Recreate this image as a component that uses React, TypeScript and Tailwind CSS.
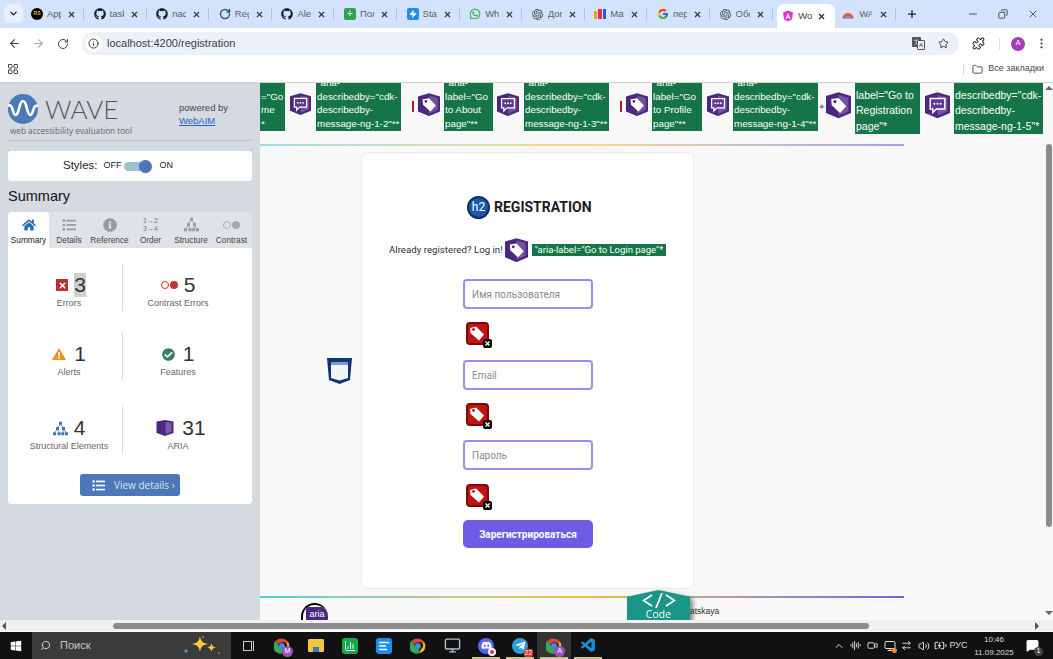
import React from 'react';
import {
  ArrowLeft, ArrowRight, RotateCw, Info, Star, Puzzle, MoreVertical, LayoutGrid, Folder, Minus, X, Plus,
  ChevronDown, ChevronUp, Search, Copy, Video, Monitor, ArrowRightLeft, Volume2, BatteryCharging, MessageSquare,
  AudioLines, BarChart3, AlignLeft, Zap,
} from 'lucide-react';
import { FaGithub, FaWhatsapp, FaHome, FaWindows, FaDiscord, FaTelegramPlane, FaInfoCircle, FaCheckCircle } from 'react-icons/fa';
import { FcGoogle } from 'react-icons/fc';
import { SiOpenai } from 'react-icons/si';
import { VscVscode } from 'react-icons/vsc';

const UI = "font-['Liberation_Sans',Arial,sans-serif]";

function ChromeDot({ size = 16, badge }: { size?: number; badge?: string }) {
  return (
    <span className="relative inline-flex">
      <svg width={size} height={size} viewBox="0 0 24 24">
        <path d="M12 1a11 11 0 0 1 9.5 5.5H12A5.5 5.5 0 0 0 7 9.7L3 3.8A11 11 0 0 1 12 1z" fill="#ea4335" />
        <path d="M21.5 6.5A11 11 0 0 1 13 23l4-7a5.5 5.5 0 0 0 0-9.5z" fill="#fbbc04" />
        <path d="M3 3.8l4.8 8.4a5.5 5.5 0 0 0 6.6 3.7L13 23A11 11 0 0 1 3 3.8z" fill="#34a853" />
        <circle cx="12" cy="12" r="4.4" fill="#4285f4" />
      </svg>
      {badge && (
        <span className="absolute -right-[3px] -bottom-[3px] flex h-[11px] w-[11px] items-center justify-center rounded-full bg-[#9b4fc0] text-[7px] text-white">
          {badge}
        </span>
      )}
    </span>
  );
}

const tabs: { title: string; icon: React.ReactNode }[] = [
  { title: 'App', icon: <span className="flex h-[12px] w-[12px] items-center justify-center rounded-full bg-black text-[5px] font-bold text-[#e0b030]">RS</span> },
  { title: 'task', icon: <FaGithub size={12} color="#1b1f24" /> },
  { title: 'nad', icon: <FaGithub size={12} color="#1b1f24" /> },
  { title: 'Reg', icon: <RotateCw size={12} color="#2b5c78" strokeWidth={3} /> },
  { title: 'Ale', icon: <FaGithub size={12} color="#1b1f24" /> },
  { title: 'Пол', icon: <span className="flex h-[12px] w-[12px] items-center justify-center rounded-[2px] bg-[#2fa14f] text-[10px] leading-none text-white">+</span> },
  { title: 'Stat', icon: <span className="flex h-[12px] w-[12px] items-center justify-center rounded-[2px] bg-[#1f8cf0]"><Zap size={8} color="#fff" fill="#fff" /></span> },
  { title: 'Wh', icon: <FaWhatsapp size={12} color="#25a83f" /> },
  { title: 'Дог', icon: <SiOpenai size={11} color="#3f3f3f" /> },
  { title: 'Mat', icon: <span className="flex h-[10px] w-[12px] items-end gap-px"><i className="h-[8px] w-[3px] bg-[#f0a020]" /><i className="h-[10px] w-[4px] bg-[#e03050]" /><i className="h-[10px] w-[3px] bg-[#2060d0]" /></span> },
  { title: 'пер', icon: <FcGoogle size={12} /> },
  { title: 'Обе', icon: <SiOpenai size={11} color="#3f3f3f" /> },
];

function TabStrip() {
  return (
    <div className="flex h-[28px] items-start bg-[#d3e3fd] text-[9.5px] text-[#5a5f66]">
      <div className="mt-[4px] ml-[4px] flex h-[19px] w-[19px] items-center justify-center rounded-[6px] bg-[#e9f0fd]">
        <ChevronDown size={11} color="#222" strokeWidth={3} />
      </div>
      <div className="ml-[2px] flex">
        {tabs.map((t, i) => (
          <div key={i} className="flex h-[28px] w-[62.6px] items-center pl-[6px]">
            <span className="flex w-[12px] justify-center">{t.icon}</span>
            <span className="ml-[4px] w-[14px] overflow-hidden whitespace-nowrap">{t.title}</span>
            <X size={9} color="#333" strokeWidth={3} className="ml-[6px]" />
            <span className="ml-[7px] h-[12px] w-px bg-[#a9c4ee]" />
          </div>
        ))}
      </div>
      <div className="mt-[4px] ml-[1px] flex h-[24px] w-[58px] items-center rounded-t-[7px] bg-white pl-[5px] text-[#444]">
        <svg width="12" height="12" viewBox="0 0 24 24">
          <path d="M12 1l10 4-2 14-8 4-8-4L2 5z" fill="#e535c9" />
          <path d="M12 6l5 12h-2.400l-1-2.600h-3.200l-1 2.600H7z" fill="#fff" />
        </svg>
        <span className="ml-[4px] w-[14px] overflow-hidden whitespace-nowrap">Wor</span>
        <X size={9} color="#222" strokeWidth={3} className="ml-[5px]" />
      </div>
      <div className="flex h-[28px] w-[63px] items-center pl-[7px]">
        <svg width="12" height="11" viewBox="0 0 24 20">
          <path d="M1 18a11 11 0 0 1 22 0h-6a5 5 0 0 0-10 0z" fill="#e8503a" />
          <path d="M7 18a5 5 0 0 1 10 0z" fill="#4a9bd8" />
        </svg>
        <span className="ml-[5px] w-[13px] overflow-hidden whitespace-nowrap">WA</span>
        <X size={9} color="#333" strokeWidth={3} className="ml-[7px]" />
        <span className="ml-[7px] h-[12px] w-px bg-[#a9c4ee]" />
      </div>
      <Plus size={12} color="#222" strokeWidth={2.5} className="mt-[8px] ml-[8px]" />
      <div className="ml-auto flex h-[28px] items-center gap-[19px] pr-[14px]">
        <Minus size={12} color="#555" />
        <Copy size={10} color="#333" className="-scale-x-100" />
        <X size={12} color="#555" />
      </div>
    </div>
  );
}

function TranslateIcon() {
  return (
    <span className="relative ml-auto block h-[13px] w-[13px]">
      <i className="absolute top-0 left-0 flex h-[10px] w-[9px] items-center justify-center rounded-[1px] bg-[#555] text-[6px] text-white not-italic">文</i>
      <i className="absolute right-0 bottom-0 flex h-[10px] w-[8px] items-center justify-center rounded-[1px] border border-[#555] bg-[#ebf0f9] text-[6px] text-[#333] not-italic">A</i>
    </span>
  );
}

function Toolbar() {
  return (
    <div className="flex h-[28px] items-center bg-white pt-[3px]">
      <ArrowLeft size={13} color="#444" className="ml-[8px]" />
      <ArrowRight size={13} color="#a8a8a8" className="ml-[11px]" />
      <RotateCw size={12} color="#444" className="ml-[12px]" />
      <div className="ml-[13px] flex h-[23px] w-[877px] items-center rounded-full bg-[#ebf0f9]">
        <span className="ml-[3px] flex h-[17px] w-[17px] items-center justify-center rounded-full bg-white">
          <Info size={11} color="#333" />
        </span>
        <span className="ml-[5px] text-[11px] text-[#3c4043]">localhost:4200/registration</span>
        <TranslateIcon />
        <Star size={11} color="#333" className="mr-[10px] ml-[13px]" />
      </div>
      <Puzzle size={13} color="#333" className="ml-[13px]" />
      <span className="ml-[14px] h-[12px] w-px bg-[#d5dfee]" />
      <span className="ml-[11px] flex h-[14px] w-[14px] items-center justify-center rounded-full bg-[#a33fb5] text-[7px] text-white">A</span>
      <MoreVertical size={13} color="#333" className="ml-[10px]" />
    </div>
  );
}

function Bookmarks() {
  return (
    <div className="flex h-[27px] items-center border-b border-[#d0d0d0] bg-white">
      <LayoutGrid size={12} color="#444" className="ml-[7px]" />
      <span className="ml-auto h-[11px] w-px bg-[#c9daf5]" />
      <Folder size={11} color="#444" className="ml-[8px]" />
      <span className="mr-[9px] ml-[5px] text-[9px] text-[#444]">Все закладки</span>
    </div>
  );
}

function Shield({ size = 22, kind, className = '' }: { size?: number; kind: 'tag' | 'chat'; className?: string }) {
  return (
    <svg width={size} height={size * 1.06} viewBox="0 0 24 25" className={`shrink-0 ${className}`}>
      <path d="M0 3.500L12 0l12 3.500V20l-12 5L0 20z" fill="#4b2780" />
      <path d="M12 2.500l9.500 2.700V18.400L12 22.500z" fill="#73529f" />
      {kind === 'tag' ? (
        <g>
          <path d="M5 6.500l7-1 7.500 8-6 6.500L5.500 12.500z" fill="#fff" />
          <circle cx="8.600" cy="9" r="1.500" fill="#4b2780" />
        </g>
      ) : (
        <g>
          <path d="M5 6h14v10h-8l-3.500 3.500V16H5z" fill="#5d3a92" stroke="#fff" strokeWidth="1.400" />
          <circle cx="9" cy="11" r="1" fill="#fff" />
          <circle cx="12" cy="11" r="1" fill="#fff" />
          <circle cx="15" cy="11" r="1" fill="#fff" />
        </g>
      )}
    </svg>
  );
}

function Green({ lines, className }: { lines: string[]; className: string }) {
  return (
    <div className={`flex shrink-0 flex-col justify-end overflow-hidden bg-[#167548] pl-px text-white ${className}`}>
      {lines.map((l, i) => (
        <span key={i} className="whitespace-nowrap">{l}</span>
      ))}
    </div>
  );
}

const RedMark = ({ className }: { className: string }) => <span className={`mt-[18px] h-[11px] w-[2px] shrink-0 bg-[#b02020] ${className}`} />;

function AnnotationStrip() {
  const small = 'h-[48px] text-[9.8px] leading-[13.8px]';
  const big = 'h-[51px] text-[10.5px] leading-[15.5px]';
  return (
    <div className="flex h-[61px] items-start overflow-hidden">
      <Green className={`w-[25px] ${small}`} lines={['="Go', 'me', '*']} />
      <Shield kind="chat" size={21} className="mt-[10px] ml-[5px]" />
      <Green className={`ml-[5px] w-[85px] ${small}`} lines={['"aria-', 'describedby="cdk-', 'describedby-', 'message-ng-1-2"**']} />
      <RedMark className="ml-[11px]" />
      <Shield kind="tag" size={22} className="mt-[10px] ml-[4px]" />
      <Green className={`ml-[4px] w-[49px] ${small}`} lines={['"aria-', 'label="Go', 'to About', 'page"**']} />
      <Shield kind="chat" size={22} className="mt-[10px] ml-[4px]" />
      <Green className={`ml-[5px] w-[85px] ${small}`} lines={['"aria-', 'describedby="cdk-', 'describedby-', 'message-ng-1-3"**']} />
      <RedMark className="ml-[11px]" />
      <Shield kind="tag" size={22} className="mt-[10px] ml-[4px]" />
      <Green className={`ml-[4px] w-[50px] ${small}`} lines={['"aria-', 'label="Go', 'to Profile', 'page"**']} />
      <Shield kind="chat" size={22} className="mt-[10px] ml-[5px]" />
      <Green className={`ml-[4px] w-[85px] ${small}`} lines={['"aria-', 'describedby="cdk-', 'describedby-', 'message-ng-1-4"**']} />
      <span className="mt-[20px] w-[8px] shrink-0 text-[9px] leading-none text-[#7b6ff0]">✦</span>
      <Shield kind="tag" size={25} className="mt-[9px]" />
      <Green className={`ml-[4px] w-[65px] ${big}`} lines={['"aria-', 'label="Go to', 'Registration', 'page"*']} />
      <Shield kind="chat" size={25} className="mt-[9px] ml-[5px]" />
      <Green className={`ml-[4px] w-[89px] ${big}`} lines={['"aria-', 'describedby="cdk-', 'describedby-', 'message-ng-1-5"*']} />
    </div>
  );
}

function MissingLabel() {
  return (
    <div className="relative ml-[104px] h-[24px] w-[24px]">
      <svg width="23" height="23" viewBox="0 0 23 23">
        <rect x="1" y="1" width="21" height="21" rx="3" fill="#c01515" stroke="#7d0808" strokeWidth="2" />
        <path d="M4 6l6-1.500 8 8-5 6-8.500-7.500z" fill="#fff" />
        <circle cx="7.500" cy="7.500" r="1.400" fill="#c01515" />
      </svg>
      <span className="absolute right-[-2px] bottom-[-2px] flex h-[9px] w-[9px] items-center justify-center rounded-[2px] bg-black">
        <X size={7} color="#fff" strokeWidth={4} />
      </span>
    </div>
  );
}

function Field({ placeholder }: { placeholder: string }) {
  return (
    <input
      placeholder={placeholder}
      className="ml-[101px] block h-[30px] w-[130px] rounded-[4px] border-2 border-[#9a8cf2] bg-white px-[7px] text-[10px] outline-none placeholder:text-[#8b8b8b]"
    />
  );
}

function RegistrationCard() {
  return (
    <div className="mt-[6px] ml-[101px] h-[437px] w-[333px] rounded-[7px] border border-[#ececec] bg-white font-['Roboto',sans-serif]">
      <div className="mt-[42px] flex h-[24px] items-center pl-[105px]">
        <span className="flex h-[23px] w-[23px] items-center justify-center rounded-full border-2 border-[#0e2f66] bg-[#1c58a8] text-[12px] text-white">h2</span>
        <h2 className="ml-[4px] text-[14px] font-bold text-[#1b1b1b]">REGISTRATION</h2>
      </div>
      <div className="mt-[19px] flex h-[24px] items-center pl-[27px]">
        <span className="w-[113px] whitespace-nowrap text-[9.7px] text-[#333]">Already registered? Log in!</span>
        <Shield kind="tag" size={23} className="ml-[3px]" />
        <span className="ml-[4px] h-[12px] w-[134px] overflow-hidden bg-[#167548] text-center text-[9.5px] leading-[12px] whitespace-nowrap text-white">"aria-label="Go to Login page"*</span>
      </div>
      <div className="mt-[17px]"><Field placeholder="Имя пользователя" /></div>
      <div className="mt-[13px]"><MissingLabel /></div>
      <div className="mt-[14px]"><Field placeholder="Email" /></div>
      <div className="mt-[13px]"><MissingLabel /></div>
      <div className="mt-[13px]"><Field placeholder="Пароль" /></div>
      <div className="mt-[14px]"><MissingLabel /></div>
      <button className="mt-[12px] ml-[101px] h-[28px] w-[130px] rounded-[5px] bg-[#6e5ce6] text-[10px] font-bold text-white">Зарегистрироваться</button>
    </div>
  );
}

function TreeIcon({ color, size = 15 }: { color: string; size?: number }) {
  return (
    <svg width={size} height={size} viewBox="0 0 20 20" fill={color}>
      <rect x="8" y="1" width="4" height="4" />
      <rect x="4" y="8" width="4" height="4" />
      <rect x="12" y="8" width="4" height="4" />
      <rect x="0" y="15" width="4" height="4" />
      <rect x="6" y="15" width="4" height="4" />
      <rect x="11" y="15" width="4" height="4" />
      <rect x="16" y="15" width="4" height="4" />
      <path d="M10 5L6 8M10 5l4 3M6 12L2 15M6 12l2 3M14 12l-1 3M14 12l4 3" stroke={color} fill="none" />
    </svg>
  );
}

function ListIcon({ color, size = 14 }: { color: string; size?: number }) {
  return (
    <svg width={size} height={size} viewBox="0 0 16 16" fill={color}>
      <circle cx="2" cy="3" r="1.500" /><rect x="5" y="2" width="11" height="2" />
      <circle cx="2" cy="8" r="1.500" /><rect x="5" y="7" width="11" height="2" />
      <circle cx="2" cy="13" r="1.500" /><rect x="5" y="12" width="11" height="2" />
    </svg>
  );
}

const waveTabs: { label: string; w: string; icon: React.ReactNode }[] = [
  { label: 'Summary', w: 'w-[41px]', icon: <FaHome size={14} color="#2f6db0" /> },
  { label: 'Details', w: 'w-[40px]', icon: <ListIcon color="#9a9a9a" /> },
  { label: 'Reference', w: 'w-[41px]', icon: <FaInfoCircle size={14} color="#9a9a9a" /> },
  { label: 'Order', w: 'w-[41px]', icon: <span className="text-[7px] leading-[8px] text-[#777]">1→2<br />3→4</span> },
  { label: 'Structure', w: 'w-[40px]', icon: <TreeIcon color="#9a9a9a" /> },
  { label: 'Contrast', w: 'w-[41px]', icon: <span className="flex items-center gap-px"><i className="h-[8px] w-[8px] rounded-full border border-[#aaa]" /><i className="h-[8px] w-[8px] rounded-full bg-[#aaa]" /></span> },
];

function Stat({ icon, value, label, highlight, gap = 'gap-[6px]', shift = '' }: { icon: React.ReactNode; value: string; label: string; highlight?: boolean; gap?: string; shift?: string }) {
  return (
    <div className="flex h-[48px] flex-col items-center justify-start pt-[10px]">
      <div className={`flex h-[24px] items-center ${gap} ${shift}`}>
        {icon}
        <span className={`text-[21px] leading-[24px] text-[#333] ${highlight ? 'bg-[#cfcfcf]' : ''}`}>{value}</span>
      </div>
      <span className="text-[9px] leading-[12px] whitespace-nowrap text-[#666]">{label}</span>
    </div>
  );
}

function StatRow({ left, right, className }: { left: React.ReactNode; right: React.ReactNode; className: string }) {
  return (
    <div className={`grid grid-cols-[107px_110px] ${className}`}>
      <div className="border-r border-[#dddddd]">{left}</div>
      <div>{right}</div>
    </div>
  );
}

function Sidebar() {
  return (
    <div className={`w-[260px] shrink-0 bg-[#d5d9e0] pt-[11px] ${UI}`}>
      <div className="ml-[8px] w-[243px] border-b border-[#b9bdc2] pb-[2px]">
        <div className="flex h-[31px]">
          <svg width="30" height="30" viewBox="0 0 30 30" className="shrink-0">
            <circle cx="15" cy="15" r="15" fill="#4a7ab8" />
            <path d="M0 12c3-2 4 1 5 5s3 6 5 1 2-11 5-11 3 6 5 11 4 3 5-1 2-6 5-5" fill="none" stroke="#fff" strokeWidth="2.600" />
          </svg>
          <span className="ml-[7px] w-[72px] font-['Lato',sans-serif] text-[26px] leading-[31px] font-light text-[#555]">WAVE</span>
          <div className="ml-[62px] pt-[7px] text-[9.5px] leading-[13px] text-[#444]">
            powered by<br />
            <a className="text-[#1a63c9] underline">WebAIM</a>
          </div>
        </div>
        <div className="-mt-[1px] pl-[2px] font-['Open_Sans',sans-serif] text-[8.2px] leading-[14px] text-[#666]">web accessibility evaluation tool</div>
      </div>
      <div className="mt-[10px] ml-[8px] flex h-[30px] w-[244px] items-center rounded-[3px] bg-white pl-[55px] text-[#222]">
        <span className="text-[11.5px]">Styles:</span>
        <span className="ml-[6px] text-[9px]">OFF</span>
        <span className="relative ml-[2px] h-[9px] w-[25px] rounded-full bg-[#a1c0cc]">
          <span className="absolute top-[-2px] right-[-3px] h-[13px] w-[13px] rounded-full bg-[#4a76b8] shadow" />
        </span>
        <span className="ml-[11px] text-[9px]">ON</span>
      </div>
      <div className="mt-[7px] ml-[8px] text-[14.5px] leading-[17px] text-[#111]">Summary</div>
      <div className="mt-[7px] ml-[8px] w-[244px]">
        <div className="flex h-[36px] rounded-t-[4px] bg-[#dfe2e7]">
          {waveTabs.map((t, i) => (
            <div key={t.label} className={`flex ${t.w} flex-col items-center justify-end pb-[3px] ${i === 0 ? 'rounded-t-[4px] bg-white text-[#222]' : 'text-[#444]'}`}>
              <span className="flex h-[17px] items-center">{t.icon}</span>
              <span className="mt-[2px] text-[8.3px] leading-[10px] whitespace-nowrap">{t.label}</span>
            </div>
          ))}
        </div>
        <div className="h-[256px] rounded-b-[4px] bg-white pt-[15px] pl-[8px]">
          <StatRow
            className=""
            left={<Stat highlight value="3" label="Errors" shift="pl-[4px]" icon={<span className="flex h-[12px] w-[12px] items-center justify-center bg-[#b8322f]"><X size={9} color="#fff" strokeWidth={4} /></span>} />}
            right={<Stat value="5" label="Contrast Errors" icon={<span className="flex items-center gap-px"><i className="h-[8px] w-[8px] rounded-full border border-[#c0392b]" /><i className="h-[8px] w-[8px] rounded-full bg-[#c0392b]" /></span>} />}
          />
          <StatRow
            className="mt-[21px]"
            left={<Stat value="1" label="Alerts" gap="gap-[8px]" icon={<svg width="14" height="12" viewBox="0 0 14 12"><path d="M7 0l7 12H0z" fill="#e8921a" /><rect x="6.200" y="4" width="1.600" height="4.500" fill="#fff" /><rect x="6.200" y="9.300" width="1.600" height="1.600" fill="#fff" /></svg>} />}
            right={<Stat value="1" label="Features" gap="gap-[8px]" icon={<FaCheckCircle size={13} color="#3a7f63" />} />}
          />
          <StatRow
            className="mt-[26px]"
            left={<Stat value="4" label="Structural Elements" icon={<TreeIcon color="#3f73bf" />} />}
            right={<Stat value="31" label="ARIA" gap="gap-[8px]" shift="pl-[6px]" icon={<svg width="18" height="16" viewBox="0 0 17 16"><path d="M0 1.500L8.500 0 17 1.500V13l-8.500 3L0 13z" fill="#4b2780" /><path d="M9 2l6 .5v9.500l-6 2z" fill="#7a5aa8" /></svg>} />}
          />
          <div className="mt-[20px] ml-[64px] flex h-[22px] w-[100px] items-center rounded-[3px] bg-[#4a78b8] pl-[12px] font-['Open_Sans',sans-serif] text-[10px] text-[#dbe5f2]">
            <ListIcon color="#fff" size={13} />
            <span className="ml-[9px]">View details ›</span>
          </div>
        </div>
      </div>
    </div>
  );
}

function Page() {
  return (
    <div className="relative min-w-0 flex-1 overflow-hidden bg-[#f8f8f8]">
      <AnnotationStrip />
      <div className="h-[2px] w-[644px] bg-linear-to-r from-[#9adfe6] via-[#f5dc82] to-[#a99bf0]" />
      <RegistrationCard />
      <div className="mt-[7px] h-[2px] w-[644px] bg-linear-to-r from-[#4fcdd8] via-[#f0c030] to-[#7b5ce6]" />
      <div className="flex h-[23px] items-end">
        <div className="relative ml-[41px] h-[18px] w-[27px] overflow-hidden rounded-t-full border-t-2 border-l-2 border-black">
          <span className="absolute right-0 bottom-0 h-[14px] w-[22px] bg-[#4b2780] text-center text-[9px] leading-[14px] text-white">aria</span>
        </div>
        <span className={`mb-[3px] ml-[362px] text-[8.5px] text-[#333] ${UI}`}>atskaya</span>
      </div>

      {/* WAVE overlay icons */}
      <div className="absolute top-[275px] left-[67px]">
        <svg width="25" height="26" viewBox="0 0 25 26">
          <path d="M0 0h25l-2 22-10.500 4L2 22z" fill="#10356f" />
          <path d="M4 4h17v16l-8.500 2.500L4 20z" fill="#f4f4f4" />
          <rect x="4" y="4" width="17" height="3" fill="#7f9cc8" />
        </svg>
      </div>
      <div className="absolute top-[507px] left-[367px] drop-shadow-[3px_2px_2px_rgba(0,0,0,0.45)]">
        <div className="flex h-[31px] w-[63px] flex-col items-center bg-[#1a9688] [clip-path:polygon(50%_0,100%_22%,100%_100%,0_100%,0_22%)] text-white">
          <svg width="34" height="15" viewBox="0 0 34 15" fill="none" stroke="#fff" strokeWidth="1.800" className="mt-[3px]">
            <path d="M10 2L1.500 7.500 10 13M24 2l8.500 5.500L24 13M20 0l-6 15" />
          </svg>
          <span className="mt-[1px] font-['Open_Sans',sans-serif] text-[10.5px] leading-[11px]">Code</span>
        </div>
      </div>
    </div>
  );
}

function VerticalScroll() {
  return (
    <div className="relative flex w-[8px] shrink-0 flex-col items-center bg-[#f8f8f8] pt-[2px]">
      <span className="mt-[1px] h-0 w-0 border-x-[4px] border-b-[4px] border-x-transparent border-b-[#666]" />
      <span className="mt-[54px] h-[383px] w-[6px] rounded-full bg-[#8b8b8b]" />
      <span className="mt-[84px] h-0 w-0 border-x-[4px] border-t-[4px] border-x-transparent border-t-[#666]" />
    </div>
  );
}

function HorizontalScroll() {
  return (
    <div className="flex h-[11px] items-center bg-[#f0f0f0]">
      <span className="ml-[2px] h-0 w-0 border-y-[4px] border-r-[4px] border-y-transparent border-r-[#555]" />
      <span className="ml-[107px] h-[6px] w-[756px] rounded-full bg-[#8b8b8b]" />
      <span className="ml-[166px] h-0 w-0 border-y-[4px] border-l-[4px] border-y-transparent border-l-[#555]" />
    </div>
  );
}

const taskIcons: { icon: React.ReactNode; active?: boolean; line?: boolean }[] = [
  { icon: <ChromeDot badge="M" /> },
  { icon: <span className="relative block h-[13px] w-[16px] rounded-[1px] bg-[#f5c542]"><i className="absolute bottom-0 left-[5px] h-[5px] w-[6px] bg-[#2d7fc4]" /></span> },
  { icon: <span className="flex h-[16px] w-[16px] items-center justify-center rounded-[3px] bg-[#12ab4b]"><BarChart3 size={12} color="#fff" /></span> },
  { icon: <span className="flex h-[16px] w-[16px] items-center justify-center rounded-[3px] bg-[#1a8df0]"><AlignLeft size={12} color="#fff" strokeWidth={3} /></span> },
  { icon: <ChromeDot /> },
  { icon: <Monitor size={17} color="#a8c0d8" /> },
  { icon: <span className="relative flex h-[16px] w-[16px] items-center justify-center rounded-full bg-[#5865f2]"><FaDiscord size={11} color="#fff" /><i className="absolute -right-[2px] -bottom-[2px] h-[8px] w-[8px] rounded-full border-2 border-white bg-[#e03040]" /></span>, line: true },
  { icon: <span className="relative flex h-[16px] w-[16px] items-center justify-center rounded-full bg-[#2a9fd8]"><FaTelegramPlane size={11} color="#fff" /><i className="absolute -right-[5px] -bottom-[3px] rounded-[2px] bg-[#e03030] px-px text-[6.5px] leading-[8px] text-white not-italic">22</i></span>, line: true },
  { icon: <ChromeDot badge="A" />, active: true, line: true },
  { icon: <VscVscode size={17} color="#1f8ad2" />, line: true },
];

const Sparkle = ({ size, color, className }: { size: number; color: string; className: string }) => (
  <svg width={size} height={size} viewBox="0 0 20 20" className={`absolute ${className}`}>
    <path d="M10 0c1 6 3 9 10 10-7 1-9 4-10 10-1-6-3-9-10-10 7-1 9-4 10-10z" fill={color} />
  </svg>
);

const traySlots = [
  <ChevronUp size={12} color="#ddd" />,
  <AudioLines size={11} color="#ddd" />,
  <Video size={11} color="#ddd" />,
  <span className="relative"><Monitor size={12} color="#ddd" /><i className="absolute -right-px -bottom-px h-[5px] w-[5px] rounded-full bg-[#f09020]" /></span>,
  <ArrowRightLeft size={11} color="#ddd" />,
  <Volume2 size={12} color="#ddd" />,
  <BatteryCharging size={13} color="#ddd" />,
];

function Taskbar() {
  return (
    <div className={`flex h-[27px] items-stretch bg-[#111111] ${UI}`}>
      <div className="flex w-[32px] items-center justify-center">
        <FaWindows size={12} color="#fff" />
      </div>
      <div className="flex w-[199px] items-center bg-[#3b3b3b] text-[11px] text-[#c8c8c8]">
        <Search size={11} color="#ddd" className="ml-[8px] -scale-x-100" />
        <span className="ml-[9px]">Поиск</span>
        <span className="relative mr-[8px] ml-auto h-[24px] w-[40px]">
          <Sparkle size={16} color="#f7c83e" className="top-[2px] left-[9px]" />
          <Sparkle size={9} color="#f7c83e" className="top-[9px] left-[24px]" />
          <Sparkle size={6} color="#3aa0e8" className="top-[14px] left-0" />
          <i className="absolute top-[2px] left-[19px] h-[2px] w-[2px] rounded-full bg-[#e8703a]" />
          <i className="absolute top-[18px] left-[35px] h-[2px] w-[2px] rounded-full bg-[#58a838]" />
        </span>
      </div>
      <div className="flex w-[34px] items-center justify-center">
        <span className="flex items-center gap-px">
          <i className="h-[10px] w-[9px] border border-[#ccc]" />
          <i className="h-[10px] w-px bg-[#ccc]" />
        </span>
      </div>
      {taskIcons.map((t, i) => (
        <div key={i} className={`relative flex w-[34px] items-center justify-center ${t.active ? 'bg-[#333333]' : ''}`}>
          {t.icon}
          {t.line && <i className="absolute bottom-0 left-[3px] h-[2px] w-[28px] bg-[#c8bf9a]" />}
        </div>
      ))}
      <div className="ml-auto flex items-center text-[#ddd]">
        {traySlots.map((s, i) => (
          <span key={i} className="flex w-[17px] justify-center">{s}</span>
        ))}
        <span className="w-[19px] text-center text-[9px] whitespace-nowrap">РУС</span>
        <span className="ml-[6px] w-[40px] text-center text-[8px] leading-[13px]">10:46<br />11.09.2025</span>
        <span className="relative mr-[14px] ml-[12px]">
          <MessageSquare size={13} color="#fff" fill="#fff" />
          <i className="absolute -right-[4px] -bottom-[4px] flex h-[9px] w-[9px] items-center justify-center rounded-full bg-[#444] text-[7px] text-white not-italic">1</i>
        </span>
      </div>
    </div>
  );
}

export default function App() {
  return (
    <div className={`flex h-[659px] w-[1053px] flex-col overflow-hidden ${UI}`}>
      <TabStrip />
      <Toolbar />
      <Bookmarks />
      <div className="flex min-h-0 flex-1">
        <Sidebar />
        <Page />
        <VerticalScroll />
      </div>
      <HorizontalScroll />
      <div className="h-px bg-white" />
      <Taskbar />
    </div>
  );
}
